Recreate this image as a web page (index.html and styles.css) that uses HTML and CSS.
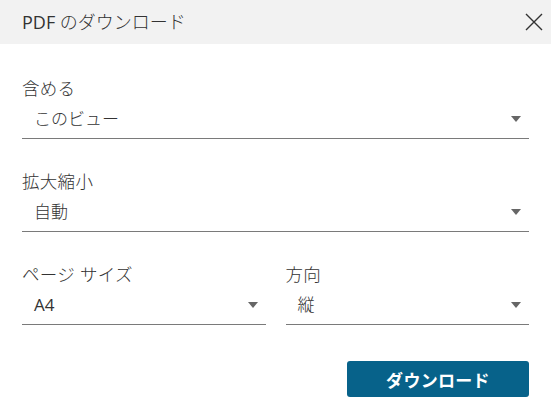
FILE: index.html
```html
<!DOCTYPE html>
<html lang="ja">
<head>
<meta charset="utf-8">
<title>PDF のダウンロード</title>
<link rel="stylesheet" href="styles.css">
</head>
<body>
<div class="dialog">
  <header class="hdr">
    <h1 class="title"><span class="latin">PDF</span> のダウンロード</h1>
    <button class="close" aria-label="閉じる">
      <svg width="18" height="18" viewBox="0 0 18 18"><path d="M1 1L17 17M17 1L1 17" stroke="#333" stroke-width="1.4" fill="none"/></svg>
    </button>
  </header>
  <main class="content">
    <div class="field">
      <div class="label">含める</div>
      <div class="select"><span class="value">このビュー</span><span class="caret"></span></div>
    </div>
    <div class="field">
      <div class="label">拡大縮小</div>
      <div class="select"><span class="value">自動</span><span class="caret"></span></div>
    </div>
    <div class="row">
      <div class="field">
        <div class="label">ページ サイズ</div>
        <div class="select"><span class="value latin">A4</span><span class="caret"></span></div>
      </div>
      <div class="field">
        <div class="label">方向</div>
        <div class="select"><span class="value">縦</span><span class="caret"></span></div>
      </div>
    </div>
    <div class="actions">
      <button class="primary">ダウンロード</button>
    </div>
  </main>
</div>
</body>
</html>
```
FILE: styles.css
```css
* { box-sizing: border-box; }
html, body { margin: 0; padding: 0; background: #fff; }
body {
  font-family: "Open Sans", "Noto Sans CJK JP", sans-serif;
  color: #333;
}
.dialog { width: 551px; }
.hdr {
  height: 44px;
  background: #f2f2f2;
  display: flex;
  align-items: center;
  justify-content: space-between;
  padding: 0 8px 0 22px;
}
.title {
  margin: 0;
  font-size: 18px;
  font-weight: 300;
  line-height: 24px;
  color: #333;
}
.latin { font-weight: 400; }
.close {
  border: 0;
  background: transparent;
  padding: 0;
  width: 18px;
  height: 18px;
  display: flex;
}
.content {
  padding: 32px 22px 0 22px;
  display: flex;
  flex-direction: column;
  gap: 30px;
}
.label {
  font-size: 17.5px;
  font-weight: 300;
  line-height: 24px;
  color: #333;
  letter-spacing: 0.3px;
}
.select {
  height: 39px;
  border-bottom: 1px solid #7a7a7a;
  display: flex;
  align-items: center;
  justify-content: space-between;
  padding: 0 8px 0 12px;
}
.value {
  font-size: 17px;
  font-weight: 300;
  line-height: 24px;
  color: #333;
}
.value.latin { font-weight: 400; }
.caret {
  width: 0;
  height: 0;
  border-left: 5px solid transparent;
  border-right: 5px solid transparent;
  border-top: 6px solid #666;
}
.row {
  display: grid;
  grid-template-columns: 1fr 1fr;
  column-gap: 20px;
}
.actions {
  display: flex;
  justify-content: flex-end;
  padding-top: 6px;
}
.primary {
  width: 182px;
  height: 36px;
  border: 0;
  border-radius: 3px;
  background: #07628a;
  color: #fff;
  font-family: "Open Sans", "Noto Sans CJK JP", sans-serif;
  font-size: 17px;
  font-weight: 700;
  letter-spacing: 0.3px;
}
```
